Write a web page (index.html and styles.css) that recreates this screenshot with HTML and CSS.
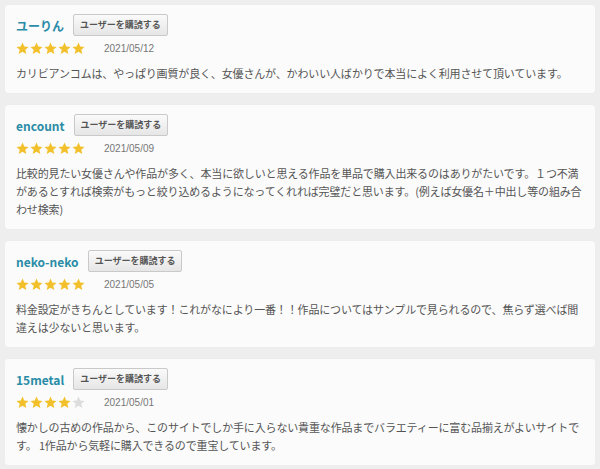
FILE: index.html
```html
<!DOCTYPE html>
<html lang="ja">
<head>
<meta charset="utf-8">
<link rel="stylesheet" href="styles.css">
</head>
<body>
<div class="list">
  <div class="card">
    <div class="head"><span class="name">ユーりん</span><button class="follow">ユーザーを購読する</button></div>
    <div class="meta">
      <span class="stars">
        <svg viewBox="0 0 14 14"><path class="on" d="M7 .6l1.9 4.3 4.6.4-3.5 3 1.1 4.6L7 10.5l-4.1 2.4L4 8.3.5 5.3l4.6-.4z"/></svg>
        <svg viewBox="0 0 14 14"><path class="on" d="M7 .6l1.9 4.3 4.6.4-3.5 3 1.1 4.6L7 10.5l-4.1 2.4L4 8.3.5 5.3l4.6-.4z"/></svg>
        <svg viewBox="0 0 14 14"><path class="on" d="M7 .6l1.9 4.3 4.6.4-3.5 3 1.1 4.6L7 10.5l-4.1 2.4L4 8.3.5 5.3l4.6-.4z"/></svg>
        <svg viewBox="0 0 14 14"><path class="on" d="M7 .6l1.9 4.3 4.6.4-3.5 3 1.1 4.6L7 10.5l-4.1 2.4L4 8.3.5 5.3l4.6-.4z"/></svg>
        <svg viewBox="0 0 14 14"><path class="on" d="M7 .6l1.9 4.3 4.6.4-3.5 3 1.1 4.6L7 10.5l-4.1 2.4L4 8.3.5 5.3l4.6-.4z"/></svg>
      </span>
      <span class="date">2021/05/12</span>
    </div>
    <p class="text">カリビアンコムは、やっぱり画質が良く、女優さんが、かわいい人ばかりで本当によく利用させて頂いています。</p>
  </div>

  <div class="card">
    <div class="head"><span class="name">encount</span><button class="follow">ユーザーを購読する</button></div>
    <div class="meta">
      <span class="stars">
        <svg viewBox="0 0 14 14"><path class="on" d="M7 .6l1.9 4.3 4.6.4-3.5 3 1.1 4.6L7 10.5l-4.1 2.4L4 8.3.5 5.3l4.6-.4z"/></svg>
        <svg viewBox="0 0 14 14"><path class="on" d="M7 .6l1.9 4.3 4.6.4-3.5 3 1.1 4.6L7 10.5l-4.1 2.4L4 8.3.5 5.3l4.6-.4z"/></svg>
        <svg viewBox="0 0 14 14"><path class="on" d="M7 .6l1.9 4.3 4.6.4-3.5 3 1.1 4.6L7 10.5l-4.1 2.4L4 8.3.5 5.3l4.6-.4z"/></svg>
        <svg viewBox="0 0 14 14"><path class="on" d="M7 .6l1.9 4.3 4.6.4-3.5 3 1.1 4.6L7 10.5l-4.1 2.4L4 8.3.5 5.3l4.6-.4z"/></svg>
        <svg viewBox="0 0 14 14"><path class="on" d="M7 .6l1.9 4.3 4.6.4-3.5 3 1.1 4.6L7 10.5l-4.1 2.4L4 8.3.5 5.3l4.6-.4z"/></svg>
      </span>
      <span class="date">2021/05/09</span>
    </div>
    <p class="text">比較的見たい女優さんや作品が多く、本当に欲しいと思える作品を単品で購入出来るのはありがたいです。１つ不満があるとすれば検索がもっと絞り込めるようになってくれれば完璧だと思います。(例えば女優名＋中出し等の組み合わせ検索)</p>
  </div>

  <div class="card">
    <div class="head"><span class="name">neko-neko</span><button class="follow">ユーザーを購読する</button></div>
    <div class="meta">
      <span class="stars">
        <svg viewBox="0 0 14 14"><path class="on" d="M7 .6l1.9 4.3 4.6.4-3.5 3 1.1 4.6L7 10.5l-4.1 2.4L4 8.3.5 5.3l4.6-.4z"/></svg>
        <svg viewBox="0 0 14 14"><path class="on" d="M7 .6l1.9 4.3 4.6.4-3.5 3 1.1 4.6L7 10.5l-4.1 2.4L4 8.3.5 5.3l4.6-.4z"/></svg>
        <svg viewBox="0 0 14 14"><path class="on" d="M7 .6l1.9 4.3 4.6.4-3.5 3 1.1 4.6L7 10.5l-4.1 2.4L4 8.3.5 5.3l4.6-.4z"/></svg>
        <svg viewBox="0 0 14 14"><path class="on" d="M7 .6l1.9 4.3 4.6.4-3.5 3 1.1 4.6L7 10.5l-4.1 2.4L4 8.3.5 5.3l4.6-.4z"/></svg>
        <svg viewBox="0 0 14 14"><path class="on" d="M7 .6l1.9 4.3 4.6.4-3.5 3 1.1 4.6L7 10.5l-4.1 2.4L4 8.3.5 5.3l4.6-.4z"/></svg>
      </span>
      <span class="date">2021/05/05</span>
    </div>
    <p class="text">料金設定がきちんとしています！これがなにより一番！！作品についてはサンプルで見られるので、焦らず選べば間違えは少ないと思います。</p>
  </div>

  <div class="card">
    <div class="head"><span class="name">15metal</span><button class="follow">ユーザーを購読する</button></div>
    <div class="meta">
      <span class="stars">
        <svg viewBox="0 0 14 14"><path class="on" d="M7 .6l1.9 4.3 4.6.4-3.5 3 1.1 4.6L7 10.5l-4.1 2.4L4 8.3.5 5.3l4.6-.4z"/></svg>
        <svg viewBox="0 0 14 14"><path class="on" d="M7 .6l1.9 4.3 4.6.4-3.5 3 1.1 4.6L7 10.5l-4.1 2.4L4 8.3.5 5.3l4.6-.4z"/></svg>
        <svg viewBox="0 0 14 14"><path class="on" d="M7 .6l1.9 4.3 4.6.4-3.5 3 1.1 4.6L7 10.5l-4.1 2.4L4 8.3.5 5.3l4.6-.4z"/></svg>
        <svg viewBox="0 0 14 14"><path class="on" d="M7 .6l1.9 4.3 4.6.4-3.5 3 1.1 4.6L7 10.5l-4.1 2.4L4 8.3.5 5.3l4.6-.4z"/></svg>
        <svg viewBox="0 0 14 14"><path class="off" d="M7 .6l1.9 4.3 4.6.4-3.5 3 1.1 4.6L7 10.5l-4.1 2.4L4 8.3.5 5.3l4.6-.4z"/></svg>
      </span>
      <span class="date">2021/05/01</span>
    </div>
    <p class="text">懐かしの古めの作品から、このサイトでしか手に入らない貴重な作品までバラエティーに富む品揃えがよいサイトで<br>す。 1作品から気軽に購入できるので重宝しています。</p>
  </div>
</div>
</body>
</html>
```

FILE: styles.css
```css
html, body {
  margin: 0;
  padding: 0;
  background: #eeeeee;
}
body {
  font-family: "Noto Sans CJK JP", "Noto Sans", sans-serif;
  color: #555;
}
.list {
  display: flex;
  flex-direction: column;
  gap: 12px;
  padding: 5px 5px;
}
.card {
  background: #fbfbfb;
  border-radius: 3px;
  box-shadow: 0 0 1px rgba(0,0,0,0.06);
  padding: 9px 11px 11px;
}
.head {
  display: flex;
  align-items: center;
  gap: 9px;
  height: 22px;
}
.name {
  font-family: "Noto Sans CJK JP", sans-serif;
  font-weight: 700;
  font-size: 12px;
  color: #2a8ca6;
}
.follow {
  height: 22px;
  padding: 0 6px;
  border: 1px solid #c9c9c9;
  border-radius: 2px;
  background: linear-gradient(#fafafa, #e6e6e6);
  font-family: "Noto Sans CJK JP", sans-serif;
  font-weight: 700;
  font-size: 9px;
  color: #555;
  line-height: 20px;
}
.meta {
  display: flex;
  align-items: center;
  margin-top: 5px;
  height: 14px;
}
.stars {
  display: flex;
  gap: 1px;
}
.stars svg {
  width: 13px;
  height: 13px;
  display: block;
}
.stars .on { fill: #f2c02a; }
.stars .off { fill: #dddddd; }
.date {
  margin-left: 19px;
  font-family: "Liberation Sans", sans-serif;
  font-size: 10px;
  color: #777;
}
.text {
  margin: 9px 0 0;
  font-size: 11px;
  line-height: 18px;
  letter-spacing: -0.15px;
  color: #555;
}
```
